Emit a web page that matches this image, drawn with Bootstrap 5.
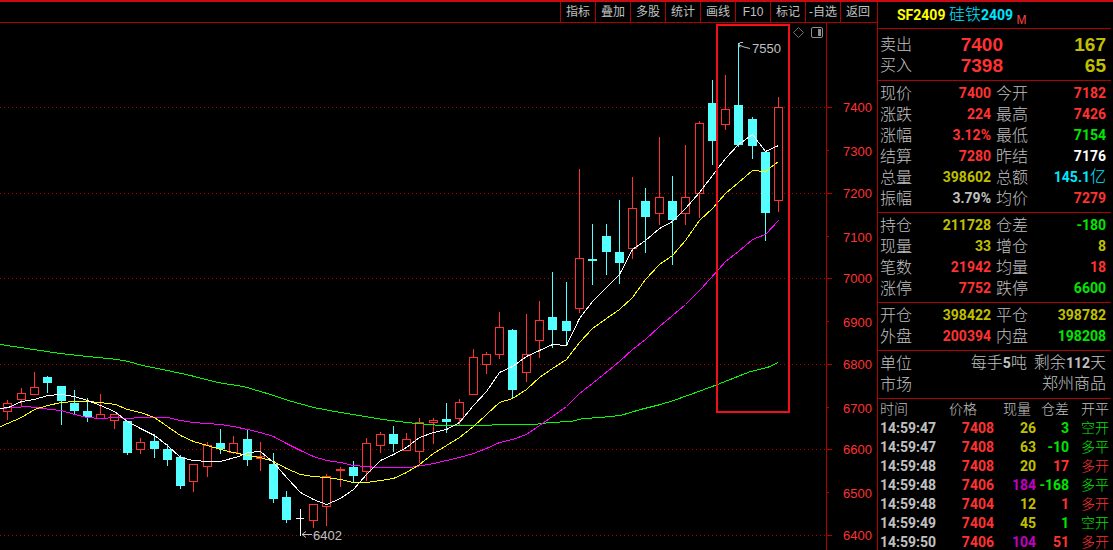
<!DOCTYPE html>
<html lang="zh-CN">
<head>
<meta charset="utf-8">
<meta name="viewport" content="width=device-width, initial-scale=1">
<title>硅铁2409 行情</title>
<link href="https://cdn.jsdelivr.net/npm/bootstrap@5.3.0/dist/css/bootstrap.min.css" rel="stylesheet">
<style>
:root{--line:#b00000;--up:#ff3232;--down:#00e600;--vol:#c0c000;--cy:#00e6ff;--gray:#c0c0c0;--mag:#c000c0}
body{background:#000;color:var(--gray);font-family:Roboto,"Noto Sans CJK SC",sans-serif;font-size:14px}
.terminal{border-top:2px solid #c80a14}
.chartpane{min-width:0}
.toolbar{border-bottom:1px solid var(--line);height:21px;padding-right:2px}
.toolbar button{width:35px;height:20px;padding:0;background:none;border:0;border-left:1px solid var(--line);color:var(--gray);font:12px/20px "Liberation Sans","Noto Sans CJK SC",sans-serif;white-space:nowrap}
.pricechart{display:block;width:100%;height:auto}
.pricechart text{font:13px "Liberation Sans",sans-serif}
.quote{flex:0 0 236px;border-left:1px solid var(--line);padding-right:2px}
.block{border-bottom:1px solid var(--line);padding:2px 5px 3px 2px;margin:0}
.block.orders{padding-top:5px;padding-bottom:4px}
.heading{height:27px;border-bottom:1px solid var(--line);padding-left:19px;font-weight:700;line-height:26px;color:#ff0;font-size:14px;margin:0}
.heading small{font:400 12px/12px "Liberation Sans",sans-serif;color:#ff4646;vertical-align:-4px}
.pairs,.single{display:grid;grid-auto-rows:21px;line-height:21px}
.pairs{grid-template-columns:32px 79px 32px 1fr}
.pairs dt:nth-of-type(even){margin-left:5px}
.pairs dt,.single dt,.cn{font-weight:300;font-size:16px;white-space:nowrap}
.cn{line-height:1}
.pairs dd,.single dd{margin:0;text-align:right;font-weight:700;white-space:nowrap}
.single{grid-template-columns:32px 1fr}
.orders.single{grid-template-columns:32px 91px 1fr}
.orders dd{font:700 19px/21px "Liberation Sans",sans-serif}
.ticks{table-layout:fixed;width:229px;margin-left:2px;line-height:16px;font-weight:700}
.ticks td,.ticks th{padding:3px 0 0;text-align:right;white-space:nowrap}
.ticks th{font-weight:300;padding-top:2px}
.ticks td:first-child,.ticks th:first-child{text-align:left}
.ticks td:last-child{font-weight:300}
.ticks th:nth-child(2){padding-right:17px}
.ticks th:nth-child(3){padding-right:5px}
.up{color:var(--up)}.down{color:var(--down)}.vol{color:var(--vol)}.cy{color:var(--cy)}.mag{color:var(--mag)}
</style>
</head>
<body>
<div class="terminal d-flex vh-100 overflow-hidden">
<main class="chartpane flex-grow-1">
<nav class="toolbar d-flex justify-content-end" aria-label="工具栏">
<button>指标</button><button>叠加</button><button>多股</button><button>统计</button><button>画线</button><button>F10</button><button>标记</button><button>-自选</button><button>返回</button>
</nav>
<svg class="pricechart" viewBox="0 23 877 527" role="img" aria-label="日K线">
<g id="grid" shape-rendering="crispEdges"></g>
<g id="candles" shape-rendering="crispEdges"></g>
<g id="averages" fill="none" shape-rendering="crispEdges"></g>
<g fill="none" stroke="#c0c0c0"><path d="M750 48.500l-6-1.500-5-2M743 42.500h-3l-1 2 1 3M312 534.500h-10M306 531.500l-4 3 4 3"/></g>
<g fill="#c0c0c0"><text x="752" y="53">7550</text><text x="313" y="540">6402</text></g>
<rect x="717" y="25" width="72" height="387" fill="none" stroke="#f0101c" stroke-width="2"/>
<path d="M798.500 27.500l5 5-5 5-5-5z" fill="none" stroke="#707070"/>
<rect x="811.500" y="27.500" width="11" height="10" rx="1.500" fill="none" stroke="#909090"/><path d="M818 29h3v7h-3z" fill="#909090"/>
</svg>
</main>
<aside class="quote">
<h1 class="heading">SF2409 <span class="cy"><span class="cn">硅铁</span>2409</span> <small>M</small></h1>
<dl class="block orders single"><dt>卖出</dt><dd class="up">7400</dd><dd class="vol">167</dd><dt>买入</dt><dd class="up">7398</dd><dd class="vol">65</dd></dl>
<dl class="block pairs">
<dt>现价</dt><dd class="up">7400</dd><dt>今开</dt><dd class="up">7182</dd>
<dt>涨跌</dt><dd class="up">224</dd><dt>最高</dt><dd class="up">7426</dd>
<dt>涨幅</dt><dd class="up">3.12%</dd><dt>最低</dt><dd class="down">7154</dd>
<dt>结算</dt><dd class="up">7280</dd><dt>昨结</dt><dd class="text-white">7176</dd>
<dt>总量</dt><dd class="vol">398602</dd><dt>总额</dt><dd class="cy">145.1<span class="cn">亿</span></dd>
<dt>振幅</dt><dd>3.79%</dd><dt>均价</dt><dd class="up">7279</dd></dl>
<dl class="block pairs">
<dt>持仓</dt><dd class="vol">211728</dd><dt>仓差</dt><dd class="down">-180</dd>
<dt>现量</dt><dd class="vol">33</dd><dt>增仓</dt><dd class="vol">8</dd>
<dt>笔数</dt><dd class="up">21942</dd><dt>均量</dt><dd class="up">18</dd>
<dt>涨停</dt><dd class="up">7752</dd><dt>跌停</dt><dd class="down">6600</dd></dl>
<dl class="block pairs">
<dt>开仓</dt><dd class="vol">398422</dd><dt>平仓</dt><dd class="vol">398782</dd>
<dt>外盘</dt><dd class="up">200394</dd><dt>内盘</dt><dd class="down">198208</dd></dl>
<dl class="block single">
<dt>单位</dt><dd><span class="cn">每手</span>5<span class="cn">吨</span>&nbsp; <span class="cn">剩余</span>112<span class="cn">天</span></dd>
<dt>市场</dt><dd><span class="cn">郑州商品</span></dd></dl>
<table class="ticks">
<colgroup><col style="width:62px"><col style="width:52px"><col style="width:42px"><col style="width:33px"><col></colgroup>
<thead><tr><th>时间</th><th>价格</th><th>现量</th><th>仓差</th><th>开平</th></tr></thead>
<tbody>
<tr><td>14:59:47</td><td class="up">7408</td><td class="vol">26</td><td class="down">3</td><td class="down">空开</td></tr>
<tr><td>14:59:47</td><td class="up">7408</td><td class="vol">63</td><td class="down">-10</td><td class="down">多平</td></tr>
<tr><td>14:59:48</td><td class="up">7408</td><td class="vol">20</td><td class="up">17</td><td class="up">多开</td></tr>
<tr><td>14:59:48</td><td class="up">7406</td><td class="mag">184</td><td class="down">-168</td><td class="down">多平</td></tr>
<tr><td>14:59:48</td><td class="up">7404</td><td class="vol">12</td><td class="up">1</td><td class="up">多开</td></tr>
<tr><td>14:59:49</td><td class="up">7404</td><td class="vol">45</td><td class="down">1</td><td class="down">空开</td></tr>
<tr><td>14:59:50</td><td class="up">7406</td><td class="mag">104</td><td class="up">51</td><td class="up">多开</td></tr>
</tbody></table>
</aside>
</div>
<script>
// Price axis: [price, y of the tick]
const axis=[[7400,107],[7300,150],[7200,193],[7100,236],[7000,278],[6900,321],[6800,364],[6700,407],[6600,449],[6500,492],[6400,535]];
let g='<path d="M826.500 23V550" stroke="#b00000"/>';
axis.forEach(([p,y],i)=>{
  if(i%2===0)g+=`<path d="M0 ${y+.5}H826" stroke="#b00000" stroke-dasharray="1 3"/>`;
  g+=`<path d="M827 ${y+.5}h${i%2?2:5}" stroke="#b00000"/><text x="872" y="${y+(i%2?6:5)}" text-anchor="end" fill="#ff3232">${p}</text>`;
});
document.getElementById('grid').innerHTML=g;
// Candles: kind (u up, d down, x doji), x, high, body top, body bottom, low
const candles=`u 7 400 403 411 420|u 21 388 393 399 406|u 34 372 387 394 394|d 47 376 377 383 393|d 61 386 386 401 425|d 74 390 403 411 414|d 87 398 411 417 422|u 100 394 414 418 418|u 114 414 414 420 429|d 127 421 421 453 455|u 140 438 442 449 454|d 154 434 441 449 458|d 167 444 449 460 466|d 180 455 457 486 489|u 193 464 464 481 492|u 207 442 445 466 477|d 220 429 443 449 454|u 233 436 443 452 454|d 247 430 439 460 466|u 260 442 456 458 471|d 273 453 464 499 503|d 286 491 497 520 523|x 300 509 518 518 536|u 313 504 504 520 528|u 326 474 476 506 526|u 340 467 469 470 487|d 353 461 467 476 482|u 366 438 443 471 481|u 380 432 434 445 453|d 393 426 434 444 452|u 406 433 439 450 451|u 419 418 422 451 463|u 433 418 420 422 444|d 446 403 419 422 433|u 459 399 402 418 425|u 473 349 357 394 394|u 486 352 354 364 374|u 499 312 327 354 359|d 512 329 330 390 398|u 526 314 354 372 382|u 539 301 320 340 358|d 552 272 317 330 348|d 566 282 321 331 345|u 579 169 258 308 313|d 592 224 259 261 285|d 606 224 236 252 275|d 619 200 252 263 284|u 632 177 208 248 259|d 645 188 201 217 253|u 659 137 197 213 225|d 672 176 201 220 265|u 685 145 197 213 225|u 699 121 123 193 218|d 712 80 103 141 165|u 725 75 109 124 130|d 738 43 105 145 147|d 752 117 119 146 159|d 765 152 152 213 241|u 778 97 107 200 212`;
document.getElementById('candles').innerHTML=candles.split('|').map(s=>{
  const [k,...v]=s.split(' '),[x,h,t,b,l]=v.map(Number);
  const c={u:'#ff3232',d:'#54ffff',x:'#ffffff'}[k];
  const wick=`<path d="M${x+.5} ${h}V${l}" stroke="${c}"/>`;
  if(k==='x')return wick+`<path d="M${x-4} ${t+.5}h8" stroke="${c}"/>`;
  return wick+(k==='u'?`<rect x="${x-3.5}" y="${t+.5}" width="8" height="${b-t}" fill="#000" stroke="${c}"/>`:`<rect x="${x-4}" y="${t}" width="9" height="${b-t}" fill="${c}"/>`);
}).join('');
// Moving averages
const averages={
'#00ff00':'0,344 33,349 60,353 87,356 117,359 128,361 142,365 167,370 190,375 217,382 243,386 270,394 288,400 313,407 340,412 370,417 383,419 406,422 440,425 487,425 497,424 533,424 550,422 570,421 583,418 600,417 620,415 640,409 660,404 673,400 690,394 717,384 750,371 767,367 778,362',
'#ff00ff':'0,408 27,406 50,409 61,410 74,414 87,417 100,418 115,417 127,418 140,417 167,417 180,420 193,422 220,424 233,426 247,429 260,432 273,436 286,443 300,450 313,456 326,460 340,462 353,465 377,467 410,467 433,463 459,457 473,453 486,448 499,442 512,439 526,434 539,425 552,416 566,406 579,393 597,379 619,361 632,349 645,339 659,326 672,315 685,304 700,289 718,269 725,261 738,251 752,239 765,234 778,220',
'#ffff00':'0,426 21,417 34,409 47,405 61,402 74,401 87,401 100,402 115,404 127,409 140,412 154,417 167,426 180,435 193,441 207,445 220,449 233,452 247,455 260,457 273,461 286,468 300,474 313,476 326,477 340,479 353,482 366,482 380,480 393,478 406,472 419,464 433,453 446,445 459,437 473,426 486,414 499,402 512,398 526,389 539,377 552,368 566,359 579,342 592,328 606,318 619,309 632,297 645,279 659,264 672,255 685,240 699,220 712,208 725,193 738,182 752,170 765,171 778,161',
'#ffffff':'0,408 8,407 21,401 34,399 47,395 61,394 74,396 87,400 100,405 114,411 127,421 140,428 154,435 167,445 180,457 193,460 207,461 220,461 238,456 248,452 260,451 273,462 287,478 300,492 313,499 326,504 340,498 353,489 366,474 380,460 393,454 406,447 419,437 433,432 446,429 459,422 473,405 486,391 499,372 512,366 526,356 539,350 552,344 566,345 579,318 592,301 606,287 619,274 632,249 645,240 659,228 672,221 685,208 699,192 712,175 725,158 738,144 752,134 765,151 778,145'};
document.getElementById('averages').innerHTML=Object.entries(averages).map(([c,p])=>`<polyline points="${p}" stroke="${c}" transform="translate(.5 .5)"/>`).join('');
</script>
<script src="https://cdn.jsdelivr.net/npm/bootstrap@5.3.0/dist/js/bootstrap.bundle.min.js"></script>
</body>
</html>
